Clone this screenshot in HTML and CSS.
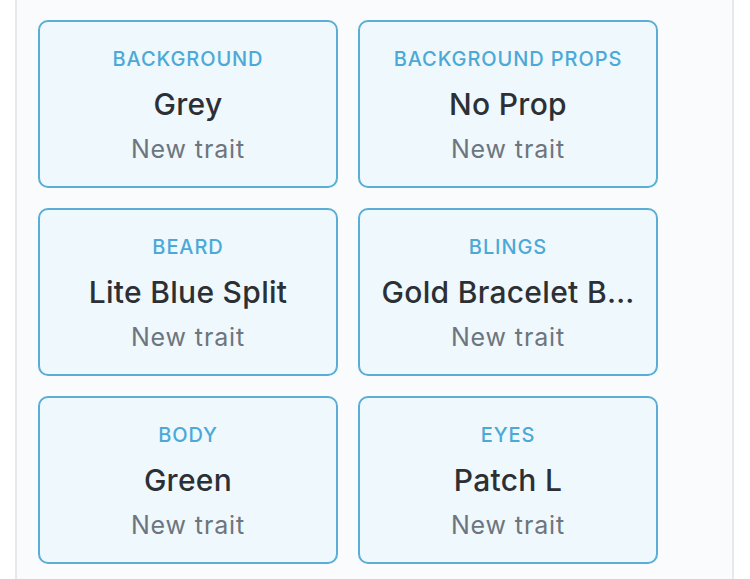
FILE: index.html
```html
<!DOCTYPE html>
<html lang="en">
<head>
<meta charset="utf-8">
<title>Traits</title>
<link rel="stylesheet" href="styles.css">
</head>
<body>
<div class="panel">
  <div class="grid">
    <div class="card">
      <div class="label">Background</div>
      <div class="value">Grey</div>
      <div class="sub">New trait</div>
    </div>
    <div class="card">
      <div class="label">Background Props</div>
      <div class="value">No Prop</div>
      <div class="sub">New trait</div>
    </div>
    <div class="card">
      <div class="label">Beard</div>
      <div class="value">Lite Blue Split</div>
      <div class="sub">New trait</div>
    </div>
    <div class="card">
      <div class="label">Blings</div>
      <div class="value">Gold Bracelet B…</div>
      <div class="sub">New trait</div>
    </div>
    <div class="card">
      <div class="label">Body</div>
      <div class="value">Green</div>
      <div class="sub">New trait</div>
    </div>
    <div class="card">
      <div class="label">Eyes</div>
      <div class="value">Patch L</div>
      <div class="sub">New trait</div>
    </div>
  </div>
</div>
</body>
</html>
```
FILE: styles.css
```css
html, body {
  margin: 0;
  padding: 0;
  background: #ffffff;
  font-family: Inter, "Noto Sans", sans-serif;
}

.panel {
  margin-left: 15px;
  width: 719px;
  height: 579px;
  box-sizing: border-box;
  border-left: 2px solid #e6e8eb;
  border-right: 2px solid #e6e8eb;
  background: #f9fbfd;
  padding: 20px 0 0 21px;
}

.grid {
  display: grid;
  grid-template-columns: 300px 300px;
  column-gap: 20px;
  row-gap: 20px;
}

.card {
  box-sizing: border-box;
  height: 168px;
  border: 2px solid #5aaed6;
  border-radius: 10px;
  background: #eff8fd;
  padding: 14px 18px;
  display: flex;
  flex-direction: column;
  align-items: center;
  justify-content: center;
  text-align: center;
}

.label,
.value,
.sub {
  width: 100%;
  height: 45px;
  line-height: 45px;
  white-space: nowrap;
  overflow: hidden;
  text-overflow: ellipsis;
}

.label {
  font-size: 20px;
  font-weight: 500;
  text-transform: uppercase;
  letter-spacing: 0.045em;
  color: #4ba9d7;
}

.value {
  font-size: 30px;
  font-weight: 500;
  letter-spacing: 0.01em;
  color: #2c3035;
}

.sub {
  font-size: 25px;
  font-weight: 400;
  letter-spacing: 0.035em;
  color: #6d757d;
}
```
